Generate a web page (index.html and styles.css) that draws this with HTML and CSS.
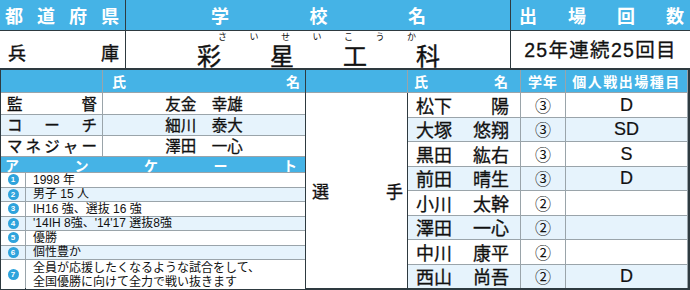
FILE: index.html
```html
<!DOCTYPE html>
<html lang="ja">
<head>
<meta charset="utf-8">
<link rel="stylesheet" href="styles.css">
</head>
<body>
<div class="page">
  <div class="top">
    <div class="th pref-h"><span>都</span><span>道</span><span>府</span><span>県</span></div>
    <div class="th school-h"><span>学</span><span>校</span><span>名</span></div>
    <div class="th count-h"><span>出</span><span>場</span><span>回</span><span>数</span></div>
    <div class="td pref-v"><span>兵</span><span>庫</span></div>
    <div class="td school-v">
      <div class="furi"><span>さ</span><span>い</span><span>せ</span><span>い</span><span>こ</span><span>う</span><span>か</span></div>
      <div class="kanji"><span>彩</span><span>星</span><span>工</span><span>科</span></div>
    </div>
    <div class="td count-v">25年連続25回目</div>
  </div>
  <div class="bottom">
    <div class="left">
      <div class="bh lh-blank"></div>
      <div class="bh lh-name"><span>氏</span><span>名</span></div>
      <div class="role"><span>監</span><span>督</span></div>
      <div class="staff">友金　幸雄</div>
      <div class="role alt"><span>コ</span><span>ー</span><span>チ</span></div>
      <div class="staff alt">細川　泰大</div>
      <div class="role"><span>マ</span><span>ネ</span><span>ジ</span><span>ャ</span><span>ー</span></div>
      <div class="staff">澤田　一心</div>
      <div class="bh enq-h"><span>ア</span><span>ン</span><span>ケ</span><span>ー</span><span>ト</span></div>
      <div class="num"><span class="dot">1</span></div><div class="ans">1998 年</div>
      <div class="num alt"><span class="dot">2</span></div><div class="ans alt">男子 15 人</div>
      <div class="num"><span class="dot">3</span></div><div class="ans">IH16 強、選抜 16 強</div>
      <div class="num alt"><span class="dot">4</span></div><div class="ans alt">'14IH 8強、'14'17 選抜8強</div>
      <div class="num"><span class="dot">5</span></div><div class="ans">優勝</div>
      <div class="num alt"><span class="dot">6</span></div><div class="ans alt">個性豊か</div>
      <div class="num"><span class="dot">7</span></div><div class="ans two">全員が応援したくなるような試合をして、<br>全国優勝に向けて全力で戦い抜きます</div>
    </div>
    <div class="right">
      <div class="bh rh-blank"></div>
      <div class="bh rh-name"><span>氏</span><span>名</span></div>
      <div class="bh rh-grade">学年</div>
      <div class="bh rh-event">個人戦出場種目</div>
      <div class="senshu"><span>選</span><span>手</span></div>

      <div class="pname"><span>松下</span><span>陽</span></div><div class="grade">③</div><div class="event">D</div>
      <div class="pname alt"><span>大塚</span><span>悠翔</span></div><div class="grade alt">③</div><div class="event alt">SD</div>
      <div class="pname"><span>黒田</span><span>紘右</span></div><div class="grade">③</div><div class="event">S</div>
      <div class="pname alt"><span>前田</span><span>晴生</span></div><div class="grade alt">③</div><div class="event alt">D</div>
      <div class="pname"><span>小川</span><span>太幹</span></div><div class="grade">②</div><div class="event"></div>
      <div class="pname alt"><span>澤田</span><span>一心</span></div><div class="grade alt">②</div><div class="event alt"></div>
      <div class="pname"><span>中川</span><span>康平</span></div><div class="grade">②</div><div class="event"></div>
      <div class="pname alt"><span>西山</span><span>尚吾</span></div><div class="grade alt">②</div><div class="event alt">D</div>
    </div>
  </div>
</div>
</body>
</html>
```
FILE: styles.css
```css
* { box-sizing: border-box; margin: 0; padding: 0; }
body {
  margin: 0;
  background: #fff;
  font-family: "Noto Sans CJK JP", "Noto Sans", sans-serif;
  color: #111;
}
.page {
  width: 690px;
  height: 290px;
  overflow: hidden;
}
.top {
  display: grid;
  grid-template-columns: 125px 384px 179px;
  grid-template-rows: 30px 37px;
  column-gap: 1px;
  row-gap: 1px;
  background: #2e3a40;
  border-right: 2px solid #2e3a40;
  border-bottom: 2px solid #2e3a40;
  height: 70px;
}
.th {
  background: #45b3e6;
  color: #fff;
  font-weight: 700;
  font-size: 18px;
  line-height: 1;
  display: flex;
  justify-content: space-between;
  align-items: center;
}
.pref-h { padding: 0 6px 1px 5px; }
.school-h { padding: 0 84px 1px 85px; }
.count-h { padding: 0 6px 1px 8px; }
.td { background: #fff; }
.pref-v {
  display: flex;
  justify-content: space-between;
  align-items: center;
  padding: 4px 6px 0 8px;
  font-size: 18px;
  line-height: 1;
  -webkit-text-stroke: 0.4px #111;
}
.school-v {
  display: flex;
  flex-direction: column;
}
.furi {
  display: flex;
  gap: 22.5px;
  padding-left: 92px;
  font-size: 9px;
  line-height: 12px;
  height: 12px;
}
.kanji {
  display: flex;
  gap: 49px;
  padding-left: 71px;
  font-size: 24px;
  line-height: 24px;
  height: 24px;
  -webkit-text-stroke: 0.4px #111;
}
.count-v {
  display: flex;
  align-items: center;
  justify-content: center;
  padding-top: 3px;
  font-family: "Liberation Sans", "Noto Sans CJK JP", sans-serif;
  font-size: 19.5px;
  line-height: 1;
  letter-spacing: 1.3px;
  -webkit-text-stroke: 0.3px #111;
}

.bottom {
  display: flex;
  height: 220px;
  border-bottom: 2px solid #2e3a40;
}
.left {
  width: 306px;
  display: grid;
  grid-template-columns: 24px 76px 202px;
  grid-template-rows: 22px 21px 20px 20px 15px repeat(6, 13.5px) 1fr;
  gap: 1px;
  background: #9aa4aa;
  border-left: 1px solid #2e3a40;
  border-right: 1px solid #2e3a40;
}
.right {
  flex: 1;
  display: grid;
  grid-template-columns: 101px 112px 44px 121px;
  grid-template-rows: 22px repeat(8, 1fr);
  gap: 1px;
  background: #9aa4aa;
  border-right: 2px solid #2e3a40;
}
.bh {
  background: #45b3e6;
  color: #fff;
  font-weight: 700;
  font-size: 14px;
  line-height: 1;
  display: flex;
  align-items: center;
}
.lh-blank { grid-column: 1 / 3; }
.lh-name { justify-content: space-between; padding: 0 5px 0 9px; }
.enq-h {
  grid-column: 1 / 4;
  justify-content: space-between;
  padding: 0 8px 0 4px;
  font-size: 14px;
}
.role {
  grid-column: 1 / 3;
  background: #fff;
  display: flex;
  justify-content: space-between;
  align-items: center;
  padding: 0 5px 0 6px;
  font-size: 15.5px;
  line-height: 1;
  -webkit-text-stroke: 0.3px #111;
}
.staff {
  background: #fff;
  display: flex;
  align-items: center;
  justify-content: center;
  font-size: 15.5px;
  line-height: 1;
  -webkit-text-stroke: 0.3px #111;
}
.alt { background: #e6f3fc; }
.num {
  background: #fff;
  display: flex;
  align-items: center;
  justify-content: center;
}
.dot {
  width: 11px;
  height: 11px;
  border-radius: 50%;
  background: #2ea3dc;
  color: #fff;
  font-size: 8px;
  font-weight: 700;
  line-height: 11px;
  text-align: center;
  font-family: "Liberation Sans", sans-serif;
}
.ans {
  grid-column: 2 / 4;
  background: #fff;
  display: flex;
  align-items: center;
  padding-left: 7px;
  font-family: "Liberation Sans", "Noto Sans CJK JP", sans-serif;
  font-size: 12px;
  line-height: 1;
}
.ans.alt, .num.alt { background: #e6f3fc; }
.ans.two { line-height: 14px; display: block; padding-top: 1px; }

.rh-name { justify-content: space-between; padding: 0 12px 0 6px; }
.rh-grade { justify-content: center; letter-spacing: 1px; }
.rh-event { justify-content: center; letter-spacing: 1.5px; font-size: 14px; }
.senshu {
  grid-column: 1;
  grid-row: 2 / 10;
  background: #fff;
  display: flex;
  justify-content: space-between;
  align-items: center;
  padding: 0 4px 0 6px;
  font-size: 17px;
  line-height: 1;
  border-right: 1px solid #2e3a40;
  margin-right: -1px;
  -webkit-text-stroke: 0.3px #111;
}
.pname {
  grid-column: 2;
  background: #fff;
  display: flex;
  justify-content: space-between;
  align-items: center;
  padding: 0 11px 0 8px;
  font-size: 18px;
  line-height: 1;
  -webkit-text-stroke: 0.3px #111;
}
.grade {
  background: #fff;
  display: flex;
  align-items: center;
  justify-content: center;
  font-size: 16px;
  line-height: 1;
}
.event {
  background: #fff;
  display: flex;
  align-items: center;
  justify-content: center;
  font-family: "Liberation Sans", sans-serif;
  font-size: 18px;
  line-height: 1;
  -webkit-text-stroke: 0.2px #111;
}
.pname.alt, .grade.alt, .event.alt { background: #e6f3fc; }
```
